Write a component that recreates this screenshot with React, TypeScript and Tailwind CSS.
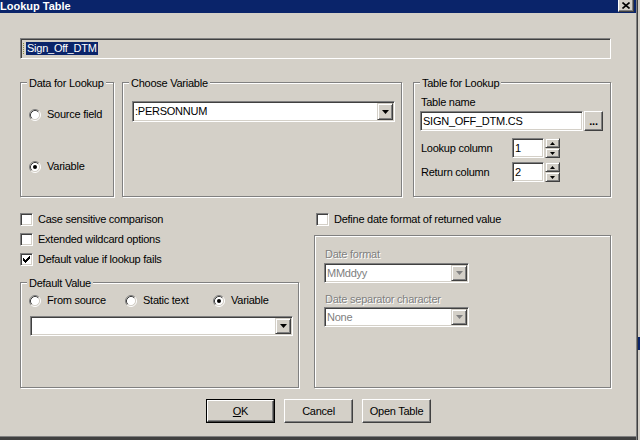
import type { ReactNode } from 'react'

const sunken =
  'border border-t-[#808080] border-l-[#808080] border-b-white border-r-white shadow-[inset_1px_1px_0_#404040,inset_-1px_-1px_0_#d4d0c8]'
const raised =
  'border border-t-[#d4d0c8] border-l-[#d4d0c8] border-b-[#404040] border-r-[#404040] shadow-[inset_1px_1px_0_#fff,inset_-1px_-1px_0_#808080] bg-[#d4d0c8]'
const push =
  'border border-t-white border-l-white border-b-[#404040] border-r-[#404040] shadow-[inset_-1px_-1px_0_#808080] bg-[#d4d0c8]'
const disabledText = 'text-[#808080] [text-shadow:1px_1px_0_#fff]'

function Arrow({ up, color = '#000', small }: { up?: boolean; color?: string; small?: boolean }) {
  const w = small ? 5 : 7
  const h = small ? 3 : 4
  const pts = up ? `0,${h} ${w},${h} ${w / 2},0` : `0,0 ${w},0 ${w / 2},${h}`
  return (
    <svg width={w} height={h} viewBox={`0 0 ${w} ${h}`} className="block">
      <polygon points={pts} fill={color} />
    </svg>
  )
}

function Radio({ checked }: { checked?: boolean }) {
  return (
    <svg width="12" height="12" viewBox="0 0 12 12" className="shrink-0 block">
      <circle cx="6" cy="6" r="4.5" fill="#fff" />
      <path d="M2.11 9.89A5.5 5.5 0 0 1 9.89 2.11" stroke="#808080" fill="none" />
      <path d="M9.89 2.11A5.5 5.5 0 0 1 2.11 9.89" stroke="#fff" fill="none" />
      <path d="M2.82 9.18A4.5 4.5 0 0 1 9.18 2.82" stroke="#404040" fill="none" />
      <path d="M9.18 2.82A4.5 4.5 0 0 1 2.82 9.18" stroke="#d4d0c8" fill="none" />
      {checked && <circle cx="6" cy="6" r="2" fill="#000" />}
    </svg>
  )
}

function Check({ checked }: { checked?: boolean }) {
  return (
    <div className={`${sunken} w-[13px] h-[13px] bg-white flex items-center justify-center shrink-0`}>
      {checked && (
        <svg width="7" height="7" viewBox="0 0 7 7" className="block" shapeRendering="crispEdges">
          <polygon points="0,2 2,4 7,0 7,3 2,7 0,5" fill="#000" />
        </svg>
      )}
    </div>
  )
}

function Combo({ value, className, disabled }: { value?: string; className: string; disabled?: boolean }) {
  return (
    <div className={`${sunken} bg-white p-[1px] flex ${className}`}>
      <div className={`flex-1 flex items-center pl-[1px] ${disabled ? 'text-[#808080]' : ''}`}>{value}</div>
      <div className={`${raised} w-[16px] flex items-center justify-center`}>
        <Arrow color={disabled ? '#808080' : '#000'} />
      </div>
    </div>
  )
}

function Edit({ value, className }: { value: string; className: string }) {
  return <div className={`${sunken} bg-white flex items-center pl-[2px] ${className}`}>{value}</div>
}

function Spin() {
  return (
    <div className="ml-[1px] w-[15px] h-[20px] flex flex-col">
      <div className={`${raised} h-[10px] flex items-center justify-center`}>
        <Arrow up small />
      </div>
      <div className={`${raised} h-[10px] flex items-center justify-center`}>
        <Arrow small />
      </div>
    </div>
  )
}

function Group({ label, className, children }: { label?: string; className: string; children?: ReactNode }) {
  return (
    <div className={`relative border border-[#808080] shadow-[inset_1px_1px_0_#fff,1px_1px_0_#fff] ${className}`}>
      {label && (
        <span className="absolute -top-[6px] left-[6px] px-[2px] bg-[#d4d0c8] leading-[13px]">{label}</span>
      )}
      {children}
    </div>
  )
}

function Option({ checked, label, className = '' }: { checked?: boolean; label: string; className?: string }) {
  return (
    <div className={`flex items-center gap-[6px] h-[13px] ${className}`}>
      <Radio checked={checked} />
      <span>{label}</span>
    </div>
  )
}

function Box({ checked, label, className = '' }: { checked?: boolean; label: string; className?: string }) {
  return (
    <div className={`flex items-center gap-[5px] h-[13px] ${className}`}>
      <Check checked={checked} />
      <span>{label}</span>
    </div>
  )
}

function Button({ children, def }: { children: ReactNode; def?: boolean }) {
  if (def)
    return (
      <div className="w-[69px] h-[24px] border border-black flex">
        <div className={`${push} flex-1 flex items-center justify-center`}>{children}</div>
      </div>
    )
  return <div className={`${push} w-[69px] h-[24px] flex items-center justify-center`}>{children}</div>
}

export default function App() {
  return (
    <div className="w-[640px] h-[440px] overflow-hidden flex bg-[#d4d0c8] text-black text-[11px] leading-[13px] tracking-[-0.25px] font-['Liberation_Sans',Arial,sans-serif]">
      <div className="w-[636px] flex flex-col">
        {/* title bar */}
        <div className="h-[13px] bg-[#0a246a] flex items-start justify-between shrink-0">
          <span className="text-white font-bold tracking-normal">Lookup Table</span>
          <div className="mr-[2px] w-[16px] h-[12px] bg-[#d4d0c8] border-l border-r border-b border-l-white border-r-[#404040] border-b-[#404040] shadow-[inset_-1px_-1px_0_#808080] flex items-center justify-center">
            <svg width="8" height="7" viewBox="0 0 8 7" className="block">
              <path d="M0.5 0.5L7.5 6.5M7.5 0.5L0.5 6.5" stroke="#000" strokeWidth="1.6" />
            </svg>
          </div>
        </div>

        <div className="flex-1 flex flex-col pl-[20px]">
          <div className={`${sunken} mt-[25px] w-[591px] h-[21px] flex items-center pl-[2px]`}>
            <span className="w-px h-[11px] border-l border-dotted border-[#8a8a3a] mr-[2px]" />
            <span className="bg-[#0a246a] text-white px-px">Sign_Off_DTM</span>
          </div>

          {/* top groups */}
          <div className="mt-[23px] flex items-start">
            <Group label="Data for Lookup" className="w-[94px] h-[115px] pl-[8px] pt-[25px]">
              <Option label="Source field" />
              <Option checked label="Variable" className="mt-[39px]" />
            </Group>
            <Group label="Choose Variable" className="ml-[8px] w-[280px] h-[115px] pl-[9px] pt-[18px]">
              <Combo value=":PERSONNUM" className="w-[263px] h-[21px]" />
            </Group>
            <Group label="Table for Lookup" className="ml-[11px] w-[198px] h-[115px] pl-[6px] pt-[13px]">
              <div className="ml-[1px]">Table name</div>
              <div className="mt-[2px] flex">
                <Edit value="SIGN_OFF_DTM.CS" className="w-[163px] h-[20px]" />
                <div className={`${push} ml-[1px] w-[19px] h-[20px] flex items-center justify-center font-bold`}>
                  ...
                </div>
              </div>
              <div className="mt-[7px] flex items-center">
                <span className="ml-[1px] w-[91px]">Lookup column</span>
                <Edit value="1" className="w-[32px] h-[20px]" />
                <Spin />
              </div>
              <div className="mt-[4px] flex items-center">
                <span className="ml-[1px] w-[91px]">Return column</span>
                <Edit value="2" className="w-[32px] h-[20px]" />
                <Spin />
              </div>
            </Group>
          </div>

          {/* lower section */}
          <div className="mt-[16px] flex items-start">
            <div className="w-[279px] flex flex-col">
              <Box label="Case sensitive comparison" />
              <Box label="Extended wildcard options" className="mt-[7px]" />
              <Box checked label="Default value if lookup fails" className="mt-[7px]" />
              <Group label="Default Value" className="mt-[16px] h-[106px] pl-[8px] pt-[11px]">
                <div className="flex">
                  <Option label="From source" className="w-[96px]" />
                  <Option label="Static text" className="w-[88px]" />
                  <Option checked label="Variable" />
                </div>
                <Combo className="mt-[9px] ml-px w-[263px] h-[20px]" />
              </Group>
            </div>
            <div className="ml-[15px] w-[297px] flex flex-col">
              <Box label="Define date format of returned value" className="ml-[2px]" />
              <Group className="mt-[9px] h-[153px] pl-[9px] pt-[12px]">
                <div className={`ml-px ${disabledText}`}>Date format</div>
                <Combo disabled value="MMddyy" className="mt-[2px] w-[145px] h-[20px]" />
                <div className={`mt-[10px] ml-px ${disabledText}`}>Date separator character</div>
                <Combo disabled value="None" className="mt-[1px] w-[145px] h-[20px]" />
              </Group>
            </div>
          </div>

          {/* buttons */}
          <div className="mt-[11px] ml-[186px] flex gap-[9px]">
            <Button def>
              <span>
                <span className="underline">O</span>K
              </span>
            </Button>
            <Button>Cancel</Button>
            <Button>Open Table</Button>
          </div>
        </div>

        <div className="h-px bg-[#808080] shrink-0" />
        <div className="h-[3px] bg-[#404040] shrink-0" />
      </div>
      <div className="w-px bg-[#808080]" />
      <div className="w-px bg-[#404040]" />
      <div className="w-[2px] flex flex-col bg-[#d4d0c8]">
        <div className="h-[337px]" />
        <div className="h-[13px] bg-[#0a246a]" />
      </div>
    </div>
  )
}
